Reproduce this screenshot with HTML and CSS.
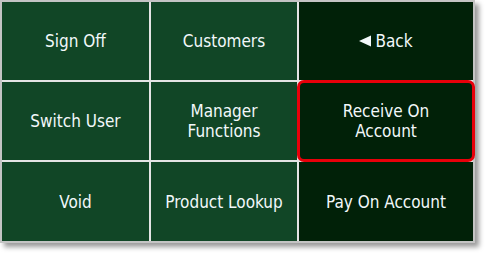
FILE: index.html
```html
<html>
    <head>
        <title>Menu</title>
        <meta charset="UTF-8">
        <link rel="stylesheet" href="styles.css">
    </head>
    <body>
        <div class="panel">
            <div class="btn">Sign Off</div>
            <div class="btn">Customers</div>
            <div class="btn dark"><svg class="arrow" width="12" height="12" viewBox="0 0 12 12"><polygon points="0,6 12,0.5 12,11.5" fill="#f2f8fa"/></svg>Back</div>
            <div class="btn">Switch User</div>
            <div class="btn">Manager<br>Functions</div>
            <div class="btn dark selected">Receive On<br>Account</div>
            <div class="btn">Void</div>
            <div class="btn">Product Lookup</div>
            <div class="btn dark">Pay On Account</div>
        </div>
    </body>
</html>
```

FILE: styles.css
```css
body{
    margin: 0px;
    background-color: white;
}

.panel{
    width: 471px;
    display: grid;
    grid-template-columns: 147px 146px 174px;
    grid-template-rows: 78px 78px 79px;
    gap: 2px;
    background-color: #e4e4e4;
    border: 2px solid #c4c4c4;
    box-shadow: 4px 4px 5px rgba(0,0,0,0.4);
}

.btn{
    background-color: #114626;
    color: #f2f8fa;
    font-family: "DejaVu Sans", sans-serif;
    font-stretch: condensed;
    font-size: 17px;
    line-height: 20px;
    display: flex;
    align-items: center;
    justify-content: center;
    text-align: center;
}

.dark{
    background-color: #012108;
}

.selected{
    outline: 3px solid #e8000a;
    outline-offset: -1px;
    border-radius: 5px;
}

.arrow{
    margin-right: 4px;
}
```
